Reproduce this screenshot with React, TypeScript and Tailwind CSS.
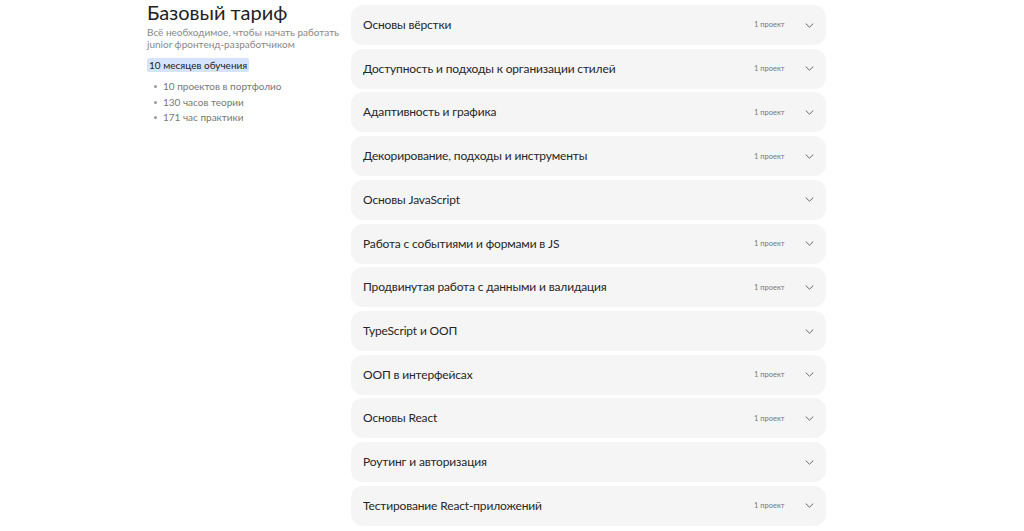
import React from "react";

type Module = { title: string; projects?: string };

const modules: Module[] = [
  { title: "Основы вёрстки", projects: "1 проект" },
  { title: "Доступность и подходы к организации стилей", projects: "1 проект" },
  { title: "Адаптивность и графика", projects: "1 проект" },
  { title: "Декорирование, подходы и инструменты", projects: "1 проект" },
  { title: "Основы JavaScript" },
  { title: "Работа с событиями и формами в JS", projects: "1 проект" },
  { title: "Продвинутая работа с данными и валидация", projects: "1 проект" },
  { title: "TypeScript и ООП" },
  { title: "ООП в интерфейсах", projects: "1 проект" },
  { title: "Основы React", projects: "1 проект" },
  { title: "Роутинг и авторизация" },
  { title: "Тестирование React-приложений", projects: "1 проект" },
];

function Chevron() {
  return (
    <svg width="9" height="5" viewBox="0 0 9 5" fill="none" className="text-[#666]">
      <path d="M1 0.8l3.5 3.4L8 0.8" stroke="currentColor" strokeWidth="1" strokeLinecap="round" strokeLinejoin="round" />
    </svg>
  );
}

function ModuleRow({ m }: { m: Module }) {
  return (
    <div className="h-[40px] rounded-[12px] bg-[#f5f5f5] flex items-center pl-[12px] pr-[8px]">
      <span className="text-[12px] tracking-[-0.15px] text-[#262626] flex-1 truncate">{m.title}</span>
      {m.projects && <span className="text-[7.5px] text-[#777] w-[46px]">{m.projects}</span>}
      <span className="w-[18px] flex justify-center">
        <Chevron />
      </span>
    </div>
  );
}

export default function App() {
  return (
    <div
      className="w-[1024px] h-[531px] overflow-hidden bg-white"
      style={{ fontFamily: "Lato, 'Noto Sans', sans-serif" }}
    >
      <div className="flex pl-[147px] pt-[5px]">
        <aside className="w-[204px] shrink-0 -mt-[5px]">
          <h2 className="text-[20px] leading-[24px] text-[#222]">Базовый тариф</h2>
          <p className="mt-[2px] text-[10px] leading-[12px] text-[#888] w-[200px]">
            Всё необходимое, чтобы начать работать junior фронтенд-разработчиком
          </p>
          <div className="mt-[1px]">
            <span className="inline-block bg-[#d5e4fc] text-[#222] text-[10px] leading-[14px] px-[2px] rounded-[2px]">
              10 месяцев обучения
            </span>
          </div>
          <ul className="mt-[4px] pl-[7px] text-[10px] leading-[15.5px] text-[#777]">
            {["10 проектов в портфолио", "130 часов теории", "171 час практики"].map((t) => (
              <li key={t} className="flex items-center gap-[6px]">
                <span className="w-[3px] h-[3px] rounded-full bg-[#999]" />
                {t}
              </li>
            ))}
          </ul>
        </aside>
        <div className="w-[475px] flex flex-col gap-[3.73px]">
          {modules.map((m) => (
            <ModuleRow key={m.title} m={m} />
          ))}
        </div>
      </div>
    </div>
  );
}
